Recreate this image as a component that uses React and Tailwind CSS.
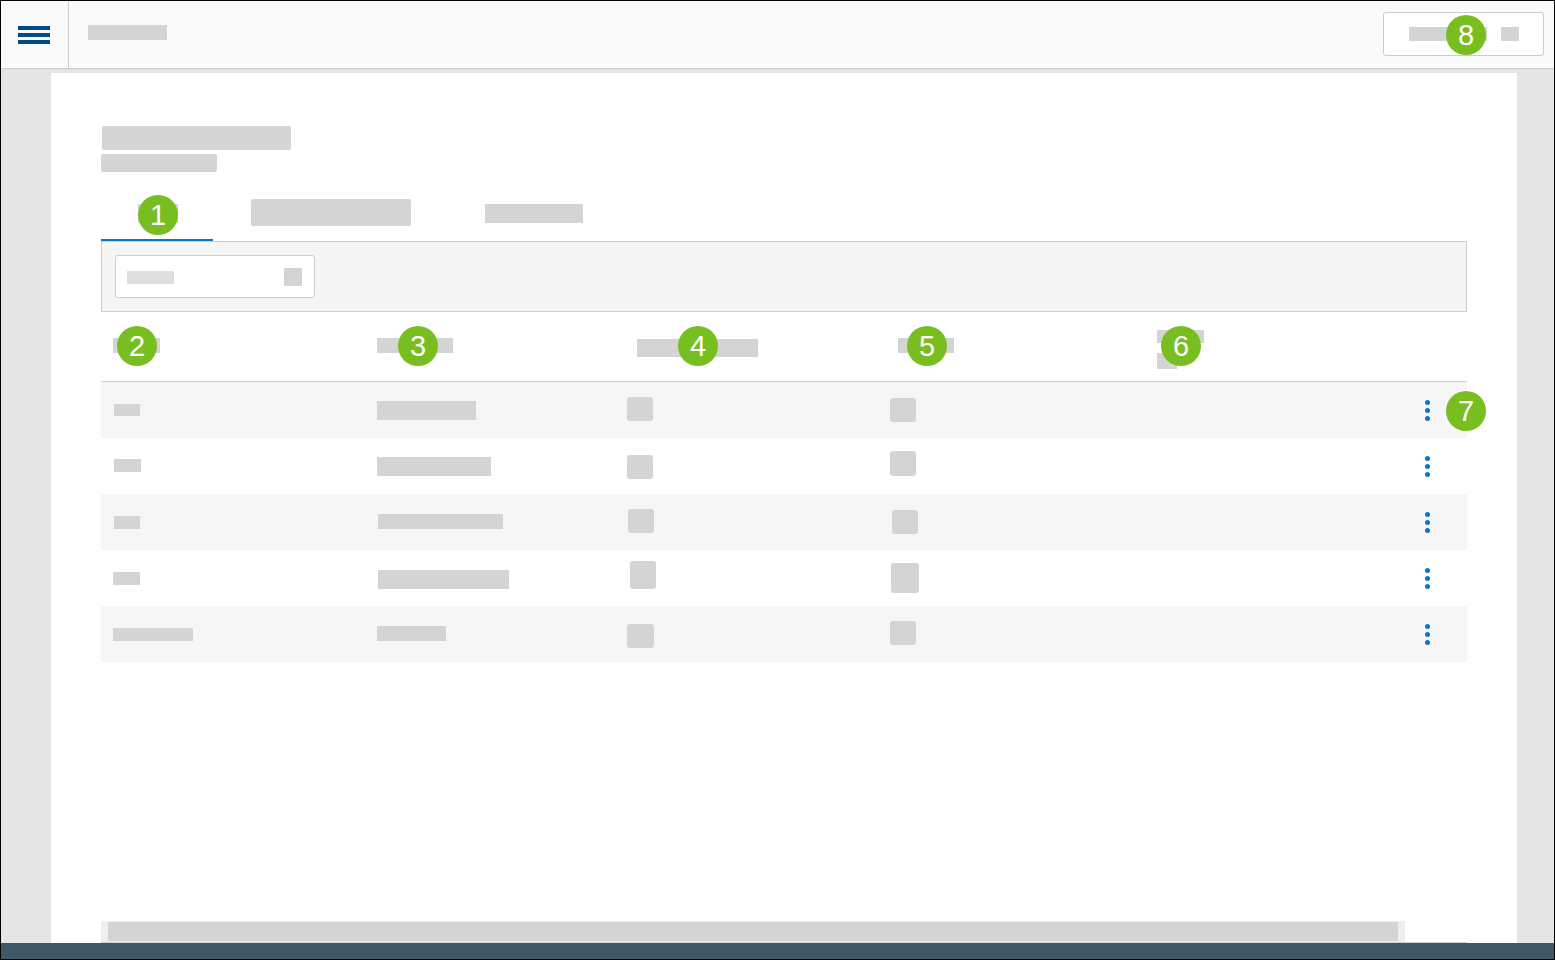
import React from 'react';

// placeholder grey blocks for each table row
const rows = [
  {
    bg: 'bg-[#f6f6f6]',
    c1: 'ml-[1px] mt-[22px] w-[26px] h-[12px]',
    c2: 'mt-[19px] w-[99px] h-[19px]',
    c3: 'mt-[15px] w-[26px] h-[24px]',
    c4: 'mt-[16px] w-[26px] h-[24px]',
  },
  {
    bg: 'bg-white',
    c1: 'ml-[1px] mt-[21px] w-[27px] h-[13px]',
    c2: 'mt-[19px] w-[114px] h-[19px]',
    c3: 'mt-[17px] w-[26px] h-[24px]',
    c4: 'mt-[13px] w-[26px] h-[25px]',
  },
  {
    bg: 'bg-[#f6f6f6]',
    c1: 'ml-[1px] mt-[22px] w-[26px] h-[13px]',
    c2: 'ml-[1px] mt-[20px] w-[125px] h-[15px]',
    c3: 'ml-[1px] mt-[15px] w-[26px] h-[24px]',
    c4: 'ml-[2px] mt-[16px] w-[26px] h-[24px]',
  },
  {
    bg: 'bg-white',
    c1: 'mt-[22px] w-[27px] h-[13px]',
    c2: 'ml-[1px] mt-[20px] w-[131px] h-[19px]',
    c3: 'ml-[3px] mt-[11px] w-[26px] h-[28px]',
    c4: 'ml-[1px] mt-[13px] w-[28px] h-[30px]',
  },
  {
    bg: 'bg-[#f6f6f6]',
    c1: 'mt-[22px] w-[80px] h-[13px]',
    c2: 'mt-[20px] w-[69px] h-[15px]',
    c3: 'mt-[18px] w-[27px] h-[24px]',
    c4: 'mt-[15px] w-[26px] h-[24px]',
  },
];

function Badge({ n, className }) {
  return (
    <div
      className={`absolute w-[40px] h-[40px] rounded-full bg-[#78be20] text-white flex items-center justify-center text-[29px] leading-none ${className}`}
      style={{ fontFamily: '"Liberation Sans", Arial, sans-serif' }}
    >
      {n}
    </div>
  );
}

function Kebab() {
  return (
    <div className="flex flex-col gap-[3px]">
      <span className="w-[5px] h-[5px] rounded-full bg-[#0a74c6]" />
      <span className="w-[5px] h-[5px] rounded-full bg-[#0a74c6]" />
      <span className="w-[5px] h-[5px] rounded-full bg-[#0a74c6]" />
    </div>
  );
}

export default function App() {
  return (
    <div
      className="w-[1555px] h-[960px] border border-black flex flex-col overflow-hidden"
      style={{ fontFamily: '"Liberation Sans", Arial, sans-serif' }}
    >
      {/* Top bar */}
      <header className="h-[68px] shrink-0 flex bg-[#fafafa] border-b border-[#cccccc]">
        <div className="w-[68px] border-r border-[#cccccc] flex items-center pl-[17px]">
          <div className="flex flex-col gap-[3px]">
            <span className="w-[32px] h-[4px] bg-[#004a87]" />
            <span className="w-[32px] h-[4px] bg-[#004a87]" />
            <span className="w-[32px] h-[4px] bg-[#004a87]" />
          </div>
        </div>
        <div className="flex-1 flex items-start pl-[19px] pt-[24px]">
          <div className="w-[79px] h-[15px] bg-[#d4d4d4]" />
        </div>
        <div className="pr-[10px] pt-[11px]">
          <div className="relative w-[161px] h-[44px] bg-white border border-[#cccccc] rounded-[3px] flex items-center pl-[25px]">
            <div className="w-[78px] h-[14px] bg-[#d4d4d4]" />
            <div className="ml-[14px] w-[18px] h-[14px] bg-[#d4d4d4]" />
            <Badge n="8" className="left-[62px] top-[2px]" />
          </div>
        </div>
      </header>

      {/* Body */}
      <main className="flex-1 bg-[#e5e5e5] pt-[4px] pl-[50px] flex">
        <section className="w-[1466px] bg-white pl-[50px] flex flex-col">
          <div className="pt-[53px]">
            <div className="w-[189px] h-[24px] bg-[#d4d4d4] rounded-[2px] ml-[1px]" />
            <div className="mt-[4px] w-[116px] h-[18px] bg-[#d4d4d4] rounded-[2px]" />
          </div>

          {/* Tabs */}
          <div className="mt-[15px] flex items-start h-[54px]">
            <div className="relative w-[112px] h-[54px] border-b-2 border-[#0a78c8]">
              <div className="absolute left-[37px] top-[17px] w-[40px] h-[19px] bg-[#d4d4d4]" />
              <Badge n="1" className="left-[37px] top-[8px]" />
            </div>
            <div className="mt-[12px] ml-[38px] w-[160px] h-[27px] bg-[#d4d4d4] rounded-[2px]" />
            <div className="mt-[17px] ml-[74px] w-[98px] h-[19px] bg-[#d4d4d4]" />
          </div>

          {/* Filter bar */}
          <div className="w-[1366px] h-[71px] bg-[#f5f5f5] border border-[#cccccc] pl-[13px] pt-[13px]">
            <div className="w-[200px] h-[43px] bg-white border border-[#cccccc] rounded-[3px] flex items-center pl-[11px] pr-[12px]">
              <div className="mt-[2px] w-[47px] h-[13px] bg-[#dedede]" />
              <div className="ml-auto w-[18px] h-[18px] bg-[#d4d4d4]" />
            </div>
          </div>

          {/* Table header */}
          <div className="relative w-[1366px] h-[70px] border-b border-[#cccccc] pl-[12px] grid grid-cols-[264px_250px_263px_267px_1fr] items-start">
            <div className="mt-[26px] w-[47px] h-[15px] bg-[#d4d4d4]" />
            <div className="mt-[26px] w-[76px] h-[15px] bg-[#d4d4d4]" />
            <div className="ml-[10px] mt-[27px] w-[121px] h-[18px] bg-[#d4d4d4]" />
            <div className="ml-[8px] mt-[26px] w-[56px] h-[15px] bg-[#d4d4d4]" />
            <div className="mt-[18px] flex flex-col gap-[10px]">
              <div className="w-[47px] h-[13px] bg-[#d4d4d4]" />
              <div className="w-[20px] h-[16px] bg-[#d4d4d4]" />
            </div>
            <Badge n="2" className="left-[16px] top-[14px]" />
            <Badge n="3" className="left-[297px] top-[14px]" />
            <Badge n="4" className="left-[577px] top-[14px]" />
            <Badge n="5" className="left-[806px] top-[14px]" />
            <Badge n="6" className="left-[1060px] top-[14px]" />
          </div>

          {/* Table rows */}
          <div className="w-[1366px]">
            {rows.map((r, i) => (
              <div
                key={i}
                className={`relative h-[56px] pl-[12px] grid grid-cols-[264px_250px_263px_267px_1fr] items-start ${r.bg}`}
              >
                <div className={`bg-[#d4d4d4] ${r.c1}`} />
                <div className={`bg-[#d4d4d4] ${r.c2}`} />
                <div className={`bg-[#d4d4d4] rounded-[3px] ${r.c3}`} />
                <div className={`bg-[#d4d4d4] rounded-[3px] ${r.c4}`} />
                <div className="h-[56px] flex items-center justify-end pr-[37px]">
                  <Kebab />
                </div>
                {i === 0 && <Badge n="7" className="right-[-19px] top-[9px]" />}
              </div>
            ))}
          </div>

          <div className="flex-1" />

          {/* Horizontal scrollbar */}
          <div className="w-[1366px] border-b border-[#d0d0d0]">
            <div className="w-[1304px] h-[21px] bg-[#efefef] pl-[7px] pr-[7px] pt-[1px]">
              <div className="h-[19px] bg-[#d4d4d4]" />
            </div>
          </div>
        </section>
      </main>

      {/* Footer */}
      <footer className="h-[16px] shrink-0 bg-[#405966]" />
    </div>
  );
}
